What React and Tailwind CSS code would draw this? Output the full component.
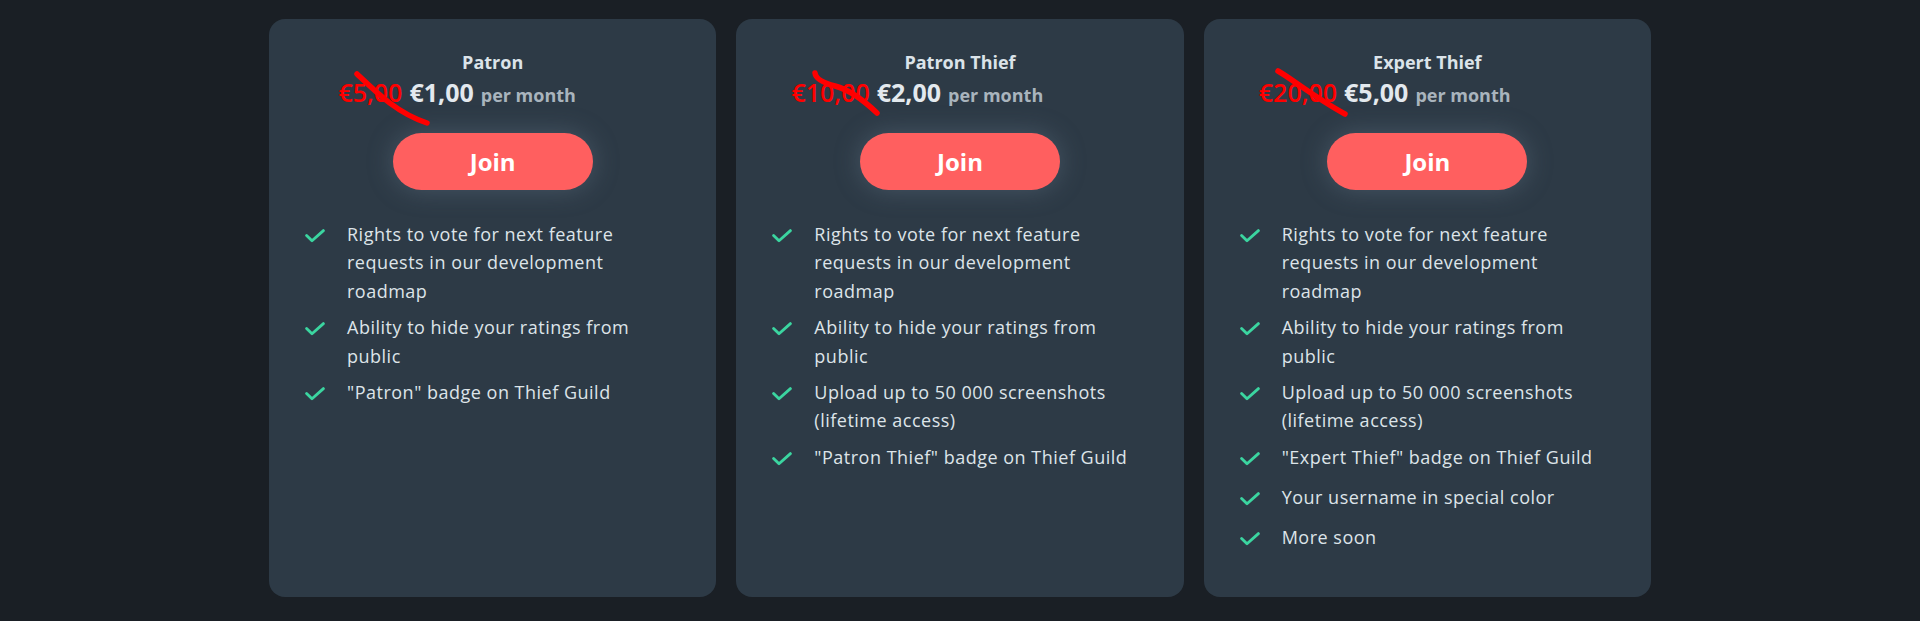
import React from "react";

const rights = ["Rights to vote for next feature", "requests in our development", "roadmap"];
const ability = ["Ability to hide your ratings from", "public"];
const upload = ["Upload up to 50 000 screenshots", "(lifetime access)"];

const plans = [
  {
    name: "Patron",
    old: "€5,00",
    price: "€1,00",
    path: "M15 5 C 35 24, 55 44, 85 54",
    features: [rights, ability, ["\"Patron\" badge on Thief Guild"]],
  },
  {
    name: "Patron Thief",
    old: "€10,00",
    price: "€2,00",
    path: "M5 4 Q 6 12 25 17 Q 44 22 67 44",
    features: [rights, ability, upload, ["\"Patron Thief\" badge on Thief Guild"]],
  },
  {
    name: "Expert Thief",
    old: "€20,00",
    price: "€5,00",
    path: "M1 2 C 15 10, 40 30, 68 45",
    features: [
      rights,
      ability,
      upload,
      ["\"Expert Thief\" badge on Thief Guild"],
      ["Your username in special color"],
      ["More soon"],
    ],
  },
];

function Check() {
  return (
    <svg width="20" height="14" viewBox="0 0 20 14" fill="none">
      <polyline
        points="1.6,6.4 7,11.8 18.4,1.6"
        stroke="#3bd5a0"
        strokeWidth="2.8"
        strokeLinecap="round"
        strokeLinejoin="round"
      />
    </svg>
  );
}

function Card({ plan }) {
  return (
    <div className="flex h-[578px] flex-col items-center rounded-2xl bg-[#2d3a46] px-9 pt-[31px]">
      <div className="text-[18px] font-bold leading-[24px] text-[#dbe3e9]">{plan.name}</div>
      <div className="relative mt-[2px] flex h-[32px] items-baseline">
        <span className="absolute right-full mr-[7px] whitespace-nowrap text-[25px] font-semibold leading-[32px] text-[#ff0000]">
          {plan.old}
          <svg
            className="absolute overflow-visible"
            style={{ left: "calc(100% - 60px)", top: "-7px" }}
            width="90"
            height="60"
            viewBox="0 0 90 60"
            fill="none"
          >
            <path d={plan.path} stroke="#ff0000" strokeWidth="5.5" strokeLinecap="round" strokeLinejoin="round" />
          </svg>
        </span>
        <span className="text-[25px] font-bold leading-[32px] text-[#e3e9ee]">{plan.price}</span>
        <span className="ml-[7px] text-[18px] font-bold leading-[32px] text-[#a9b4bd]">per month</span>
      </div>
      <button className="mt-[25px] h-[57px] w-[200px] rounded-full bg-[#ff5f5f] text-[24px] font-bold text-white shadow-[0_0_26px_rgba(120,140,160,0.35)]">
        Join
      </button>
      <ul className="mt-[30px] flex w-full flex-col gap-2">
        {plan.features.map((lines) => (
          <li key={lines[0]} className="flex items-start gap-[22px]">
            <span className="flex h-8 w-5 shrink-0 items-center">
              <Check />
            </span>
            <span className="whitespace-nowrap text-[18px] leading-[28.4px] tracking-[0.5px] text-[#dde4e9]">
              {lines.map((l, i) => (
                <React.Fragment key={i}>
                  {i > 0 && <br />}
                  {l}
                </React.Fragment>
              ))}
            </span>
          </li>
        ))}
      </ul>
    </div>
  );
}

export default function App() {
  return (
    <div className="min-h-screen bg-[#1a1f25] pt-[19px] font-['Open_Sans',sans-serif]">
      <div className="mx-auto grid w-[1382px] grid-cols-3 gap-5">
        {plans.map((p) => (
          <Card key={p.name} plan={p} />
        ))}
      </div>
    </div>
  );
}
